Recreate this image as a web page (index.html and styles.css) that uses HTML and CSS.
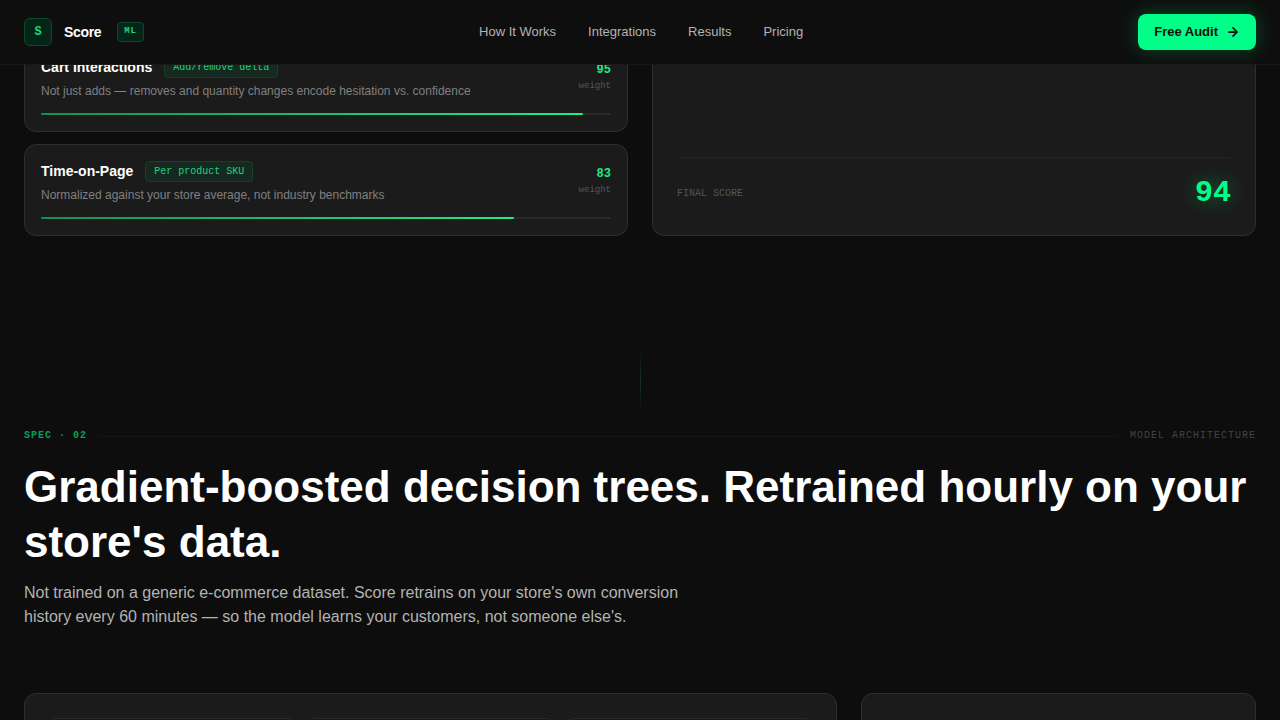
FILE: index.html
```html
<!DOCTYPE html>
<html lang="en">
<head>
  <meta charset="UTF-8">
  <meta name="viewport" content="width=device-width, initial-scale=1.0">
  <title>Score ML</title>
  <link rel="stylesheet" href="styles.css">
</head>
<body>
  <header class="header">
    <a class="brand" href="#">
      <span class="brand-mark">S</span>
      <span class="brand-name">Score</span>
      <span class="brand-tag">ML</span>
    </a>
    <nav class="nav">
      <a href="#how">How It Works</a>
      <a href="#integrations">Integrations</a>
      <a href="#results">Results</a>
      <a href="#pricing">Pricing</a>
    </nav>
    <button class="cta" type="button">
      <span>Free Audit</span>
      <svg width="14" height="14" viewBox="0 0 24 24" fill="none" stroke="currentColor" stroke-width="3" stroke-linecap="round" stroke-linejoin="round" aria-hidden="true">
        <path d="M5 12h14M12 5l7 7-7 7"/>
      </svg>
    </button>
  </header>

  <main>
    <section class="signals">
      <div class="signal-list">
        <article class="card signal">
          <div class="signal-top">
            <div class="signal-info">
              <div class="signal-title">
                <h3>Cart Interactions</h3>
                <span class="pill">Add/remove delta</span>
              </div>
              <p>Not just adds — removes and quantity changes encode hesitation vs. confidence</p>
            </div>
            <div class="weight"><strong>95</strong><span>weight</span></div>
          </div>
          <div class="track"><div class="fill" style="width: 95%"></div></div>
        </article>

        <article class="card signal">
          <div class="signal-top">
            <div class="signal-info">
              <div class="signal-title">
                <h3>Time-on-Page</h3>
                <span class="pill">Per product SKU</span>
              </div>
              <p>Normalized against your store average, not industry benchmarks</p>
            </div>
            <div class="weight"><strong>83</strong><span>weight</span></div>
          </div>
          <div class="track"><div class="fill" style="width: 83%"></div></div>
        </article>
      </div>

      <div class="card score-card">
        <div class="final">
          <span class="final-label">FINAL SCORE</span>
          <span class="final-value">94</span>
        </div>
      </div>
    </section>

    <div class="connector"></div>

    <section class="model" id="how">
      <div class="spec">
        <span class="spec-number">SPEC · 02</span>
        <span class="spec-line"></span>
        <span class="spec-name">MODEL ARCHITECTURE</span>
      </div>
      <h2>Gradient-boosted decision trees. Retrained hourly on your store's data.</h2>
      <p class="lead">Not trained on a generic e-commerce dataset. Score retrains on your store's own conversion history every 60 minutes — so the model learns your customers, not someone else's.</p>

      <div class="model-grid">
        <div class="card trees">
          <div class="tree"></div>
          <div class="tree"></div>
          <div class="tree"></div>
        </div>
        <div class="card"></div>
      </div>
    </section>
  </main>
</body>
</html>
```

FILE: styles.css
```css
* {
  box-sizing: border-box;
}
body {
  margin: 0;
  height: 100vh;
  overflow: hidden;
  background-color: #0d0d0d;
  color: #fff;
  font-family: "Liberation Sans", Arial, sans-serif;
}
h2, h3, p {
  margin: 0;
}
a {
  color: inherit;
  text-decoration: none;
}

/* Header */
.header {
  position: fixed;
  top: 0;
  left: 0;
  right: 0;
  z-index: 10;
  display: flex;
  align-items: center;
  justify-content: space-between;
  height: 65px;
  padding: 0 24px;
  background-color: #0e0e0e;
  border-bottom: 1px solid #191919;
}
.brand {
  display: flex;
  align-items: center;
  gap: 12px;
}
.brand-mark,
.brand-tag,
.pill {
  font-family: "Liberation Mono", monospace;
  color: #1ed47f;
  background-color: #052617;
  border: 1px solid #0b4b2e;
}
.brand-mark {
  width: 28px;
  height: 28px;
  border-radius: 6px;
  font-size: 12px;
  font-weight: bold;
  line-height: 26px;
  text-align: center;
}
.brand-name {
  font-size: 14px;
  font-weight: bold;
  line-height: 20px;
  letter-spacing: -0.35px;
}
.brand-tag {
  height: 20px;
  margin-left: 4px;
  padding: 0 6px;
  border-radius: 4px;
  font-size: 9px;
  font-weight: bold;
  line-height: 16px;
  letter-spacing: 1px;
}
.nav {
  display: flex;
  gap: 32px;
  font-size: 13px;
  line-height: 20px;
  color: #b3b3b3;
}
.cta {
  display: flex;
  align-items: center;
  gap: 8px;
  height: 36px;
  padding: 0 16px;
  border: none;
  border-radius: 8px;
  background-color: #00ff88;
  color: #0d0d0d;
  font-family: inherit;
  font-size: 13px;
  font-weight: bold;
  line-height: 20px;
  box-shadow: 0 0 20px rgba(0, 255, 136, 0.25);
  cursor: pointer;
}

/* Signals */
.card {
  background-color: #1b1b1b;
  border: 1px solid #2e2e2e;
  border-radius: 12px;
}
.signals {
  display: grid;
  grid-template-columns: 1fr 1fr;
  gap: 24px;
  padding: 40px 24px 114px;
}
.signal-list {
  display: flex;
  flex-direction: column;
  gap: 12px;
}
.signal {
  padding: 16px;
}
.signal-top {
  display: flex;
  align-items: flex-start;
  justify-content: space-between;
  margin-bottom: 13px;
}
.signal-title {
  display: flex;
  align-items: flex-start;
  gap: 12px;
  margin-bottom: 4px;
}
.signal h3 {
  font-size: 14px;
  line-height: 20px;
}
.pill {
  padding: 0 8px;
  border-radius: 4px;
  background-color: #14291f;
  border-color: #17402c;
  font-size: 10px;
  line-height: 19px;
}
.signal p {
  font-size: 12px;
  line-height: 18px;
  color: #808080;
}
.weight {
  display: flex;
  flex-direction: column;
  align-items: flex-end;
  padding-top: 4px;
  font-family: "Liberation Mono", monospace;
}
.weight strong {
  font-size: 12px;
  line-height: 18px;
  color: #1fec87;
}
.weight span {
  font-size: 9px;
  line-height: 14px;
  color: #555;
}
.track {
  height: 2px;
  border-radius: 1px;
  background-color: #2a2a2a;
}
.fill {
  height: 2px;
  border-radius: 1px;
  background: linear-gradient(90deg, #148f56, #1fec87);
}
.score-card {
  display: flex;
  flex-direction: column;
  justify-content: flex-end;
  padding: 24px;
}
.final {
  display: flex;
  align-items: center;
  justify-content: space-between;
  padding-top: 17px;
  border-top: 1px solid #242424;
  font-family: "Liberation Mono", monospace;
}
.final-label {
  font-size: 10px;
  color: #555;
}
.final-value {
  font-size: 30px;
  font-weight: bold;
  line-height: 36px;
  color: #00ff88;
  text-shadow: 0 0 20px rgba(0, 255, 136, 0.4);
}

/* Line between sections */
.connector {
  width: 1px;
  height: 64px;
  margin: 0 auto;
  background: linear-gradient(transparent, #0d3625, transparent);
}

/* Model */
.model {
  padding: 14px 24px 0;
}
.spec {
  display: flex;
  align-items: center;
  gap: 12px;
  margin-bottom: 15px;
  font-family: "Liberation Mono", monospace;
  font-size: 10px;
  line-height: 16px;
  letter-spacing: 1px;
}
.spec-number {
  color: #0b9d58;
  font-weight: bold;
}
.spec-line {
  flex: 1;
  height: 1px;
  background-color: #141414;
}
.spec-name {
  color: #444;
}
.model h2 {
  font-size: 44px;
  line-height: 55px;
}
.lead {
  max-width: 672px;
  margin-top: 12px;
  font-size: 16px;
  line-height: 24px;
  color: #b3b3b3;
}
.model-grid {
  display: grid;
  grid-template-columns: repeat(12, 1fr);
  gap: 24px;
  margin-top: 64px;
}
.model-grid .card {
  grid-column: span 4;
}
.model-grid .trees {
  grid-column: span 8;
  display: grid;
  grid-template-columns: repeat(3, 1fr);
  gap: 12px;
  padding: 24px;
}
.tree {
  height: 160px;
  border: 1px solid #2a2a2a;
  border-radius: 8px;
  background-color: #171717;
}
```
